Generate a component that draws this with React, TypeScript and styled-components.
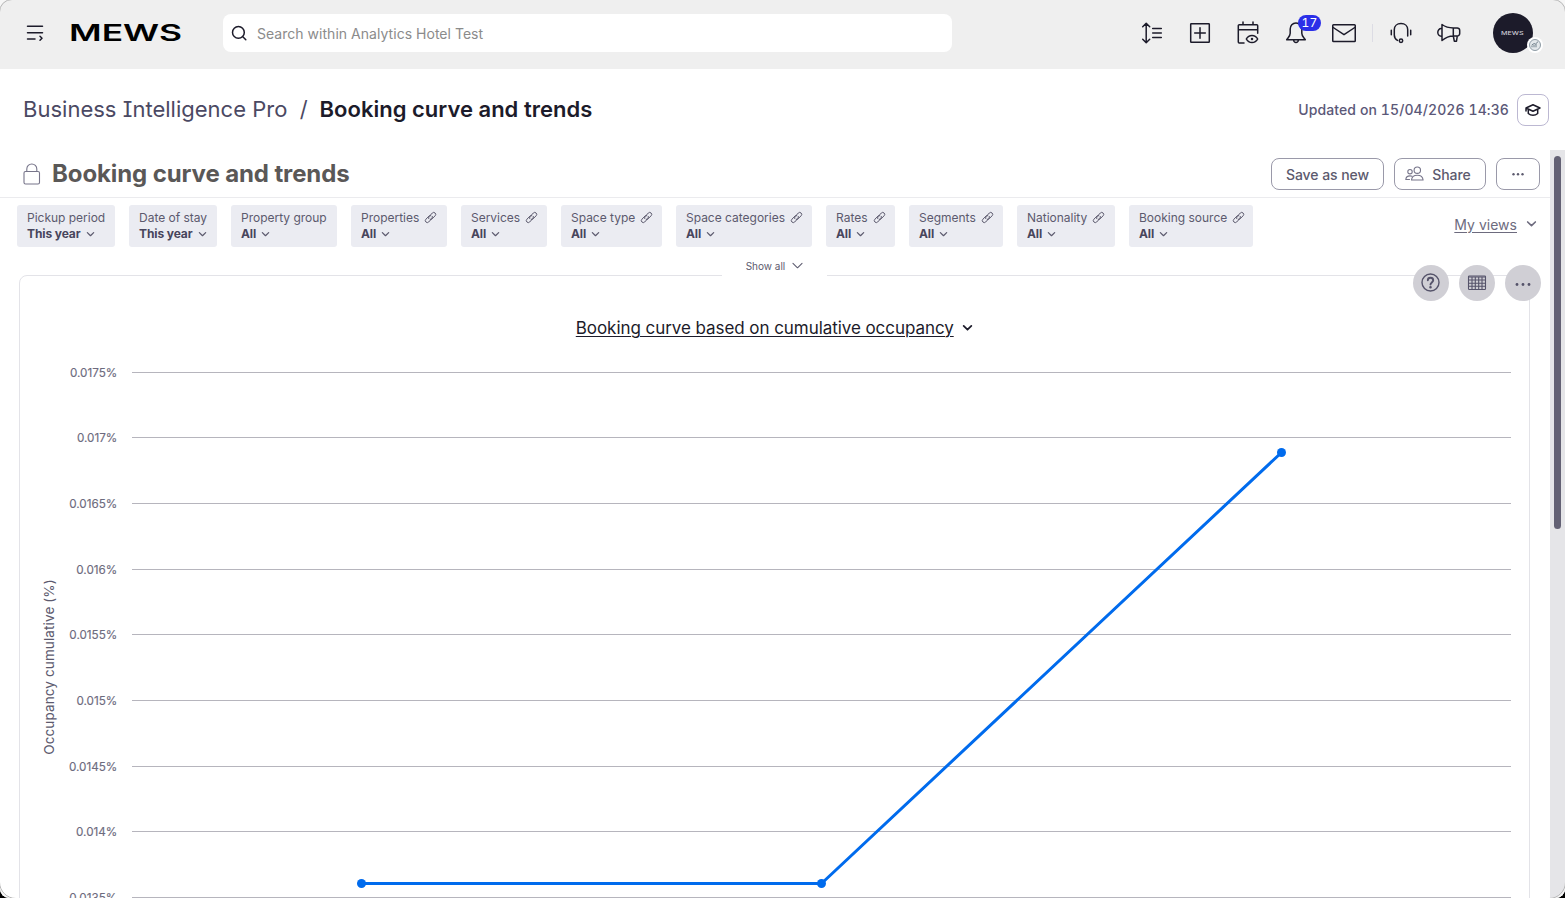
import React from 'react';
import styled, { createGlobalStyle, css } from 'styled-components';

const Global = createGlobalStyle`
  * { box-sizing: border-box; }
  html, body { margin: 0; padding: 0; background: #000; }
  body { font-family: Inter, "Liberation Sans", sans-serif; overflow: hidden; }
  button { font-family: inherit; background: none; border: 0; padding: 0; margin: 0; }
`;

const Window = styled.div`
  position: relative;
  width: 1565px;
  height: 898px;
  overflow: hidden;
  display: flex;
  flex-direction: column;
  background: #fff;
  border-radius: 0 0 9px 9px;
`;

const WindowEdge = styled.div`
  position: absolute;
  inset: -1px;
  border: 1px solid #b8b8b8;
  border-radius: 13px 13px 17px 17px;
  box-shadow: 0 0 0 10px #f6f6f6;
  pointer-events: none;
`;

const Header = styled.header`
  flex: none;
  height: 69px;
  background: #efefef;
  display: flex;
  align-items: center;
  padding: 0 24px 3px 23px;
`;

const Icon = styled.svg<{ $sw?: number; $c?: string }>`
  display: block;
  flex: none;
  fill: none;
  stroke: ${(p) => p.$c ?? '#1c1b2a'};
  stroke-width: ${(p) => p.$sw ?? 1.5};
  stroke-linecap: round;
  stroke-linejoin: round;
`;

const Logo = styled.svg`
  display: block;
  flex: none;
  margin-left: 22px;
  overflow: visible;
  font-family: Inter, sans-serif;
  font-weight: 600;
`;

const Search = styled.div`
  display: flex;
  align-items: center;
  gap: 9px;
  width: 729px;
  height: 38px;
  margin-left: 40px;
  padding-left: 8px;
  border-radius: 8px;
  background: #fff;
  color: #8b8b8b;
  font-size: 14px;
  letter-spacing: 0.03px;
`;

const Actions = styled.nav`
  margin-left: auto;
  display: flex;
  align-items: center;
  gap: 24px;
`;

const Action = styled.button`
  position: relative;
  width: 24px;
  height: 24px;
`;

const Count = styled.span`
  position: absolute;
  left: 14px;
  top: -6px;
  width: 23px;
  height: 16px;
  border-radius: 8px;
  background: #2b2fe8;
  color: #fff;
  font-size: 12px;
  line-height: 16px;
  letter-spacing: 0.3px;
  font-variant-numeric: tabular-nums;
  text-align: center;
`;

const Divider = styled.span`
  width: 1px;
  height: 18px;
  margin: 0 -8px;
  background: #dcdce4;
`;

const Avatar = styled.div`
  position: relative;
  width: 40px;
  height: 40px;
  margin: 0 8px 0 8px;
  border-radius: 50%;
  background: #1c1b2a;
`;

const AvatarBadge = styled.svg`
  position: absolute;
  left: 34px;
  top: 24px;
`;

const TitleRow = styled.div`
  flex: none;
  height: 81px;
  display: flex;
  align-items: center;
  padding: 0 16px 0 23px;
`;

const Crumb = styled.span<{ $current?: boolean }>`
  margin-top: -2px;
  font-size: 22px;
  line-height: 28px;
  white-space: pre;
  color: #4b4963;
  letter-spacing: 0.01px;
  font-feature-settings: 'cv08' 1;
  ${(p) => p.$current && css`
    color: #1c1b2a;
    font-weight: 600;
    margin-left: -0.5px;
  `}
`;

const Updated = styled.span`
  margin-left: auto;
  margin-right: 8px;
  color: #5b5878;
  font-size: 14px;
  font-weight: 500;
  letter-spacing: 0.09px;
  font-variant-numeric: tabular-nums;
`;

const Learn = styled.button`
  width: 32px;
  height: 32px;
  display: flex;
  align-items: center;
  justify-content: center;
  border: 1px solid #bcb8d2;
  border-radius: 8px;
`;

const Body = styled.div`
  flex: 1;
  min-height: 0;
  display: flex;
`;

const Dashboard = styled.main`
  width: 1550px;
  display: flex;
  flex-direction: column;
  overflow: hidden;
`;

const ScrollTrack = styled.div`
  flex: 1;
  padding: 6px 4px;
  background: #e5e5e8;
`;

const ScrollThumb = styled.div`
  width: 7px;
  height: 373px;
  border-radius: 4px;
  background: #636174;
`;

const DashHead = styled.div`
  flex: none;
  height: 48px;
  display: flex;
  align-items: center;
  padding: 0 10px 0 23px;
  border-bottom: 1px solid #ebebee;
`;

const DashTitle = styled.h1`
  margin: 0 auto 0 11px;
  font-size: 24px;
  line-height: 32px;
  font-weight: 700;
  color: #5a5857;
  letter-spacing: -0.11px;
`;

const OutlineButton = styled.button<{ $w: number }>`
  width: ${(p) => p.$w}px;
  height: 32px;
  margin-left: 10px;
  display: flex;
  align-items: center;
  justify-content: center;
  gap: 8px;
  border: 1px solid #9a99a9;
  border-radius: 8px;
  color: #5c5a6e;
  font-size: 14px;
  font-weight: 500;
  letter-spacing: -0.05px;
  white-space: nowrap;
`;

const ButtonLabel = styled.span`
  padding-top: 2px;
`;

const ShareContent = styled.span`
  display: flex;
  align-items: center;
  gap: 8.5px;
  padding-right: 4.5px;
`;

const Filters = styled.div`
  flex: none;
  height: 49px;
  display: flex;
  gap: 14px;
  padding: 7px 13px 0 17px;
`;

const Chip = styled.button<{ $w: number }>`
  width: ${(p) => p.$w}px;
  height: 42px;
  padding: 0 0 1px 10px;
  border-radius: 3px;
  background: #ebecf2;
  color: #5c5a6e;
  font-size: 12px;
  line-height: 16px;
  text-align: left;
  white-space: nowrap;
  letter-spacing: -0.01px;
`;

const ChipLine = styled.span<{ $bold?: boolean }>`
  display: flex;
  align-items: center;
  gap: 5px;
  ${(p) => p.$bold && css`
    color: #47455c;
    font-weight: 700;
    letter-spacing: -0.1px;
    svg { margin-top: 1px; }
  `}
`;

const MyViews = styled.button`
  margin-left: auto;
  height: 38px;
  display: flex;
  align-items: center;
  gap: 9px;
  color: #6d6b7e;
  font-size: 14px;
  letter-spacing: 0.02px;
  span { text-decoration: underline; text-underline-offset: 2px; }
`;

const ShowAll = styled.button`
  position: relative;
  z-index: 1;
  flex: none;
  align-self: center;
  display: flex;
  align-items: center;
  justify-content: center;
  gap: 6px;
  width: 105px;
  height: 29px;
  margin: 0 2px -1px 0;
  padding: 9px 0 0 2px;
  background: #fff;
  color: #5c5a6e;
  font-size: 10px;
`;

const Card = styled.section`
  position: relative;
  flex: none;
  width: 1511px;
  height: 700px;
  margin: 0 0 0 19px;
  border: 1px solid #e3e3e8;
  border-radius: 8px;
  display: flex;
  flex-direction: column;
`;

const CardTools = styled.div`
  position: absolute;
  right: -12px;
  top: -11px;
  display: flex;
  gap: 10px;
`;

const Tool = styled.button`
  width: 36px;
  height: 36px;
  display: flex;
  align-items: center;
  justify-content: center;
  border-radius: 50%;
  background: #d0cfd5;
`;

const CardTitle = styled.h2`
  flex: none;
  margin: 40px 0 0;
  height: 24px;
  display: flex;
  align-items: center;
  justify-content: center;
  gap: 8.5px;
  color: #1c1b2a;
  font-size: 17px;
  font-weight: 400;
  letter-spacing: -0.06px;
  span { text-decoration: underline; text-decoration-thickness: 1px; text-underline-offset: 2px; }
`;

const Chart = styled.svg`
  flex: none;
  display: block;
  font-family: Inter, sans-serif;
`;

type Filter = { label: string; value: string; width: number; linked?: boolean };

const filters: Filter[] = [
  { label: 'Pickup period', value: 'This year', width: 98 },
  { label: 'Date of stay', value: 'This year', width: 88 },
  { label: 'Property group', value: 'All', width: 106 },
  { label: 'Properties', value: 'All', width: 96, linked: true },
  { label: 'Services', value: 'All', width: 86, linked: true },
  { label: 'Space type', value: 'All', width: 101, linked: true },
  { label: 'Space categories', value: 'All', width: 136, linked: true },
  { label: 'Rates', value: 'All', width: 69, linked: true },
  { label: 'Segments', value: 'All', width: 94, linked: true },
  { label: 'Nationality', value: 'All', width: 98, linked: true },
  { label: 'Booking source', value: 'All', width: 124, linked: true },
];

const ticks = [
  { label: '0.0175%', y: 32.5 },
  { label: '0.017%', y: 97.5 },
  { label: '0.0165%', y: 163.5 },
  { label: '0.016%', y: 229.5 },
  { label: '0.0155%', y: 294.5 },
  { label: '0.015%', y: 360.5 },
  { label: '0.0145%', y: 426.5 },
  { label: '0.014%', y: 491.5 },
  { label: '0.0135%', y: 557.5 },
];

const points = [
  [341.5, 543.5],
  [801.5, 543.5],
  [1261.5, 112.5],
];

const Chevron = ({ w = 9, sw = 1.4, c = '#5c5a6e' }: { w?: number; sw?: number; c?: string }) => (
  <Icon width={w} height={w * 0.7} viewBox="0 0 10 7" $sw={sw} $c={c}>
    <path d="M1.5 1.8 5 5.200l3.500-3.400" />
  </Icon>
);

const LinkIcon = () => (
  <Icon width={13} height={13} viewBox="0 0 13 13" $sw={1} $c="#5c5a6e">
    <path d="M4.700 7.500 4.800 5.900 8.300 2a2 2 0 0 1 2.800 0 2 2 0 0 1 0 2.800L8 7.900a1.800 1.800 0 0 1-1.800.4" />
    <path d="M8.300 5.500 8.200 7.100 4.700 11a2 2 0 0 1-2.800 0 2 2 0 0 1 0-2.800L5 5.100a1.800 1.800 0 0 1 1.800-.4" />
  </Icon>
);

export default function App() {
  return (
    <Window>
      <Global />
      <Header>
        <Icon width={24} height={24} viewBox="0 0 24 24">
          <path d="M4.500 5.200h15M4.500 11.700h15M4.500 18.100h7.500M17 15.300l2 1.900-2 2" />
        </Icon>
        <Logo width={114} height={30} viewBox="0 0 114 30">
          <text x="0" y="23" fontSize="22.200" textLength="113" lengthAdjust="spacingAndGlyphs">MEWS</text>
        </Logo>
        <Search>
          <Icon width={17} height={17} viewBox="0 0 17 17">
            <circle cx="7.400" cy="7.400" r="5.900" />
            <path d="m11.800 11.800 3 3" />
          </Icon>
          Search within Analytics Hotel Test
        </Search>
        <Actions>
          <Action>
            <Icon width={24} height={24} viewBox="0 0 24 24">
              <path d="M6.200 2.500v19M2.700 5.800l3.500-3.500 3.500 3.500M2.700 18.200l3.500 3.500 3.500-3.500M12.700 7.500h8.600M12.700 12.100h8.600M12.700 16.600h8.600" />
            </Icon>
          </Action>
          <Action>
            <Icon width={24} height={24} viewBox="0 0 24 24">
              <rect x="2.700" y="2.700" width="18.600" height="18.600" rx=".6" />
              <path d="M12 6.700v10.600M6.700 12h10.600" />
            </Icon>
          </Action>
          <Action>
            <Icon width={24} height={24} viewBox="0 0 24 24" $sw={1.5}>
              <path d="M8 22H3.300a1 1 0 0 1-1-1V4.800a1 1 0 0 1 1-1h17.400a1 1 0 0 1 1 1v7.500M2.300 8.700h19.400M7 1v2.500M17 1v2.500" />
              <path d="M10.300 18c1.300-2.300 3.300-3.500 5.700-3.500s4.400 1.200 5.700 3.500c-1.300 2.300-3.300 3.500-5.700 3.500S11.600 20.300 10.300 18Z" />
              <circle cx="16" cy="18" r=".5" fill="#1c1b2a" />
            </Icon>
          </Action>
          <Action>
            <Icon width={24} height={24} viewBox="0 0 24 24">
              <path d="M12 2C8.500 2 6.200 4.800 6.200 8v4.200c0 2.800-1.700 4-3.500 6.600h18.600c-1.800-2.600-3.500-3.800-3.500-6.600V8c0-3.200-2.300-6-5.800-6ZM9.600 19c.2 1.600 1.200 2.500 2.400 2.500s2.200-.9 2.400-2.500" />
            </Icon>
            <Count>17</Count>
          </Action>
          <Action>
            <Icon width={24} height={24} viewBox="0 0 24 24">
              <rect x=".75" y="3.700" width="22.500" height="16.800" rx=".8" />
              <path d="m1.200 6.500 10.800 7.200 10.800-7.200" />
            </Icon>
          </Action>
          <Divider />
          <Action>
            <Icon width={24} height={24} viewBox="0 0 24 24">
              <path d="M8.500 19.400C6.500 18.300 5.300 16.700 5.300 14V8.500C5.300 5 8 2.500 12 2.500S18.700 5 18.700 8.500V15M2.300 9.200v4.500M21.700 9.200v4.500" />
              <circle cx="12" cy="19.700" r="1.700" />
            </Icon>
          </Action>
          <Action>
            <Icon width={24} height={24} viewBox="0 0 24 24">
              <path d="M5 3.500C8 5.700 12 6.900 16.300 6.900h3.900a2.500 2.500 0 0 1 2.500 2.500v3.100a2.500 2.500 0 0 1-2.500 2.500h-3.900C12 15 8 17 5 19.500ZM5 7.500H4.200C2.200 7.500.8 9.300.8 11.300s1.400 3.900 3.400 3.900H5M16.300 7v8l1 5.200h2.200L20.300 15" />
            </Icon>
          </Action>
          <Avatar>
            <svg width="40" height="40" viewBox="0 0 40 40">
              <text x="8" y="22.300" fontSize="4.800" fontWeight="500" fill="#c9c9d2" fontFamily="Inter, sans-serif" textLength="22.500" lengthAdjust="spacingAndGlyphs">MEWS</text>
            </svg>
            <AvatarBadge width={16} height={16} viewBox="0 0 16 16">
              <circle cx="8" cy="8" r="8" fill="#fff" />
              <circle cx="8" cy="8" r="5.500" fill="#e3e8eb" stroke="#8e9ba5" />
              <path d="M5 10.300V8.500M7 10.300V8M9 10.300V7M4.800 8l2.200-1.400 1.500.4 2.500-2.300" stroke="#70808b" fill="none" />
            </AvatarBadge>
          </Avatar>
        </Actions>
      </Header>

      <TitleRow>
        <Crumb>Business Intelligence Pro  /  </Crumb>
        <Crumb $current>Booking curve and trends</Crumb>
        <Updated>Updated on 15/04/2026 14:36</Updated>
        <Learn>
          <Icon width={16} height={16} viewBox="0 0 16 16" $sw={1.5}>
            <path d="M8 2.700 15 6 8 9.200 1 6ZM3.300 7.500v4c2.700 2.400 6.700 2.400 9.400 0v-4M1 6v3" />
          </Icon>
        </Learn>
      </TitleRow>

      <Body>
        <Dashboard>
          <DashHead>
            <Icon width={18} height={22} viewBox="0 0 18 22" $sw={1.1} $c="#77758a">
              <rect x="1" y="8.500" width="15.500" height="12.500" rx="1.500" />
              <path d="M3.800 8.500V6a5 5 0 0 1 10 0v2.500" />
            </Icon>
            <DashTitle>Booking curve and trends</DashTitle>
            <OutlineButton $w={113}><ButtonLabel>Save as new</ButtonLabel></OutlineButton>
            <OutlineButton $w={92}>
              <ShareContent>
                <Icon width={19} height={16} viewBox="0 0 19 16" $sw={1.1} $c="#77758a">
                  <circle cx="12.300" cy="4.200" r="3.200" />
                  <path d="M6.500 14c.3-3.300 2.500-4.800 5.800-4.800s5.500 1.500 5.800 4.800Z" />
                  <circle cx="5" cy="5.700" r="2.200" />
                  <path d="M4.500 13.500H.8c.2-2.400 1.700-3.600 4.200-3.600.8 0 1.500.1 2 .4" />
                </Icon>
                <ButtonLabel>Share</ButtonLabel>
              </ShareContent>
            </OutlineButton>
            <OutlineButton $w={44}>
              <svg width="14" height="4" viewBox="0 0 14 4" fill="#5c5a6e">
                <circle cx="2.500" cy="2.300" r="1.200" /><circle cx="7" cy="2.300" r="1.200" /><circle cx="11.500" cy="2.300" r="1.200" />
              </svg>
            </OutlineButton>
          </DashHead>

          <Filters>
            {filters.map((f) => (
              <Chip key={f.label} $w={f.width}>
                <ChipLine>{f.label}{f.linked && <LinkIcon />}</ChipLine>
                <ChipLine $bold>{f.value}<Chevron /></ChipLine>
              </Chip>
            ))}
            <MyViews><span>My views</span><Chevron w={11} sw={1.5} c="#6d6b7e" /></MyViews>
          </Filters>

          <ShowAll>Show all<Chevron w={13} sw={0.8} /></ShowAll>

          <Card>
            <CardTools>
              <Tool>
                <Icon width={20} height={20} viewBox="0 0 20 20" $sw={1.4} $c="#55536a">
                  <circle cx="9.500" cy="9.500" r="8.500" />
                  <path d="M6.800 7.300c0-1.600 1.200-2.500 2.700-2.500s2.700 1 2.700 2.500c0 2-2.700 2.200-2.700 4.200" strokeWidth="1.900" />
                  <circle cx="9.500" cy="14.300" r=".6" fill="#55536a" />
                </Icon>
              </Tool>
              <Tool>
                <Icon width={20} height={18} viewBox="0 0 20 18" $sw={1.1} $c="#55536a">
                  <rect x="1.500" y="2" width="17" height="13.500" rx=".8" />
                  <path d="M1.500 3h17M1.500 6h17M1.500 9.200h17M1.500 12.300h17M5 3v12.500M8.300 3v12.500M11.700 3v12.500M15 3v12.500" />
                </Icon>
              </Tool>
              <Tool>
                <svg width="18" height="6" viewBox="0 0 18 6" fill="#55536a">
                  <circle cx="3" cy="4.500" r="1.400" /><circle cx="9" cy="4.500" r="1.400" /><circle cx="15" cy="4.500" r="1.400" />
                </svg>
              </Tool>
            </CardTools>
            <CardTitle><span>Booking curve based on cumulative occupancy</span><Chevron w={11} sw={1.6} c="#1c1b2a" /></CardTitle>
            <Chart width={1509} height={620} viewBox="0 0 1509 620">
              {ticks.map((t) => (
                <g key={t.label}>
                  <line x1="112" x2="1491" y1={t.y} y2={t.y} stroke="#b6b5bd" />
                  <text x="97.300" y={t.y + 4.5} fontSize="11.700" textAnchor="end" fill="#6d6b7e" stroke="#6d6b7e" strokeWidth="0.150">{t.label}</text>
                </g>
              ))}
              <text transform="translate(34 327) rotate(-90)" fontSize="13.500" textAnchor="middle" fill="#5c5a6e" letterSpacing="0.12">Occupancy cumulative (%)</text>
              <polyline points={points.map((p) => p.join(',')).join(' ')} fill="none" stroke="#006bed" strokeWidth="3" strokeLinejoin="round" />
              {points.map(([x, y]) => <circle key={x} cx={x} cy={y} r="4.500" fill="#006bed" />)}
            </Chart>
          </Card>
        </Dashboard>
        <ScrollTrack><ScrollThumb /></ScrollTrack>
      </Body>
      <WindowEdge />
    </Window>
  );
}
